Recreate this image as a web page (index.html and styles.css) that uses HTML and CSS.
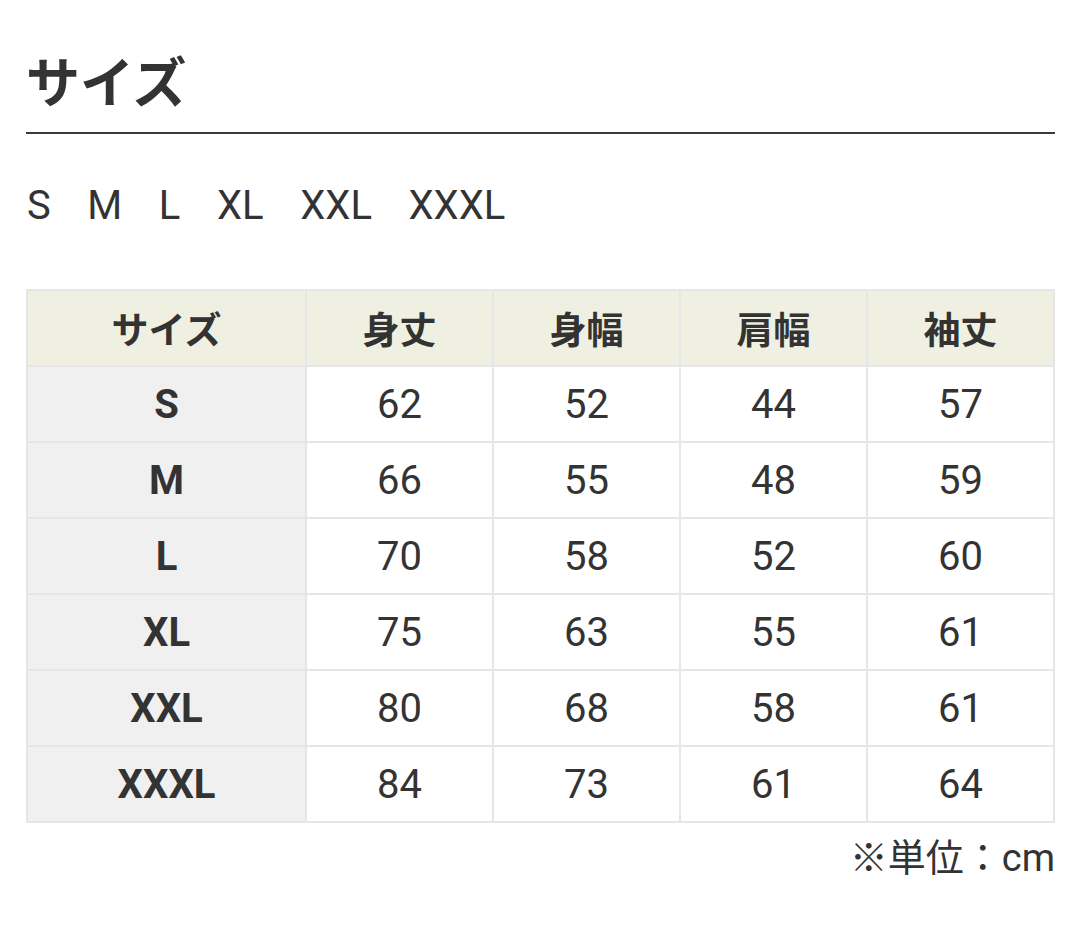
FILE: index.html
```html
<!DOCTYPE html>
<html lang="ja">
<head>
<meta charset="utf-8">
<title>サイズ</title>
<link rel="stylesheet" href="styles.css">
</head>
<body>
<div class="page">
  <h1 class="title">サイズ</h1>
  <ul class="size-list">
    <li>S</li><li>M</li><li>L</li><li>XL</li><li>XXL</li><li>XXXL</li>
  </ul>
  <table class="size-table">
    <colgroup>
      <col class="c-first"><col class="c-val"><col class="c-val"><col class="c-val"><col class="c-val">
    </colgroup>
    <thead>
      <tr><th>サイズ</th><th>身丈</th><th>身幅</th><th>肩幅</th><th>袖丈</th></tr>
    </thead>
    <tbody>
      <tr><th>S</th><td>62</td><td>52</td><td>44</td><td>57</td></tr>
      <tr><th>M</th><td>66</td><td>55</td><td>48</td><td>59</td></tr>
      <tr><th>L</th><td>70</td><td>58</td><td>52</td><td>60</td></tr>
      <tr><th>XL</th><td>75</td><td>63</td><td>55</td><td>61</td></tr>
      <tr><th>XXL</th><td>80</td><td>68</td><td>58</td><td>61</td></tr>
      <tr><th>XXXL</th><td>84</td><td>73</td><td>61</td><td>64</td></tr>
    </tbody>
  </table>
  <p class="note">※単位：cm</p>
</div>
</body>
</html>
```

FILE: styles.css
```css
html, body {
  margin: 0;
  padding: 0;
  background: #ffffff;
}

body {
  font-family: Roboto, "Noto Sans CJK JP", sans-serif;
  color: #333333;
}

.page {
  padding: 53px 22px 0 26px;
}

.title {
  margin: 0;
  font-family: "Noto Sans CJK JP", sans-serif;
  font-size: 54px;
  line-height: 54px;
  font-weight: 700;
  color: #333333;
  padding-bottom: 25px;
  border-bottom: 2px solid #3a3a3a;
}

.size-list {
  list-style: none;
  margin: 52px 0 0 0;
  padding: 0 0 0 1px;
  display: flex;
  gap: 36.6px;
  font-size: 40px;
  line-height: 40px;
  color: #333333;
}

.size-list li {
  margin: 0;
}

.size-table {
  margin-top: 63px;
  width: 1029px;
  border-collapse: collapse;
  table-layout: fixed;
  font-size: 40px;
}

.c-first { width: 279px; }
.c-val { width: 187px; }

.size-table th,
.size-table td {
  height: 74px;
  padding: 0;
  border: 2px solid #e6e6e6;
  text-align: center;
  vertical-align: middle;
  color: #333333;
}

.size-table thead th {
  background: #eff0e2;
  font-family: "Noto Sans CJK JP", sans-serif;
  font-size: 37px;
  font-weight: 700;
}

.size-table tbody th {
  background: #f0f0f0;
  font-weight: 700;
}

.size-table td {
  font-weight: 400;
  background: #ffffff;
}

.note {
  margin: 16px 0 0 0;
  text-align: right;
  font-size: 38px;
  line-height: 38px;
  color: #333333;
}
```
